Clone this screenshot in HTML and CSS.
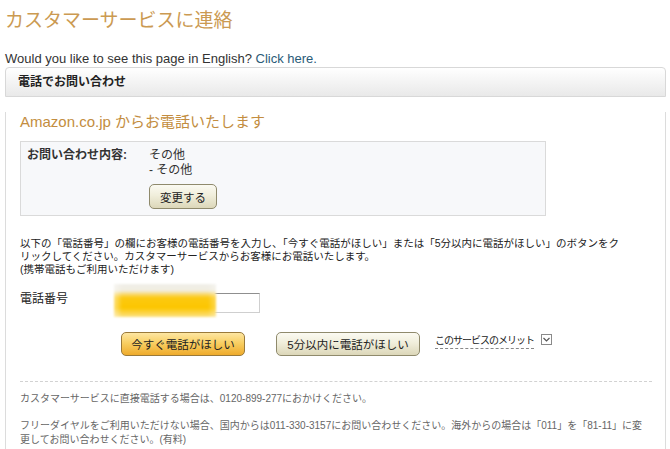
FILE: index.html
```html
<!DOCTYPE html>
<html lang="ja">
<head>
<meta charset="utf-8">
<title>カスタマーサービスに連絡</title>
<link rel="stylesheet" href="styles.css">
</head>
<body>
<h1 class="title">カスタマーサービスに連絡</h1>
<p class="lang">Would you like to see this page in English? <a class="link" href="#">Click here.</a></p>
<div class="panel">
  <div class="panel-head">電話でお問い合わせ</div>
  <div class="panel-body">
    <h2 class="call-title"><span class="latin">Amazon.co.jp</span> からお電話いたします</h2>
    <div class="inquiry">
      <div class="inq-label">お問い合わせ内容:</div>
      <div class="inq-values">
        <div>その他</div>
        <div>- その他</div>
        <button class="btn btn-beige btn-change" type="button">変更する</button>
      </div>
    </div>
    <p class="instructions">以下の「電話番号」の欄にお客様の電話番号を入力し、「今すぐ電話がほしい」または「5分以内に電話がほしい」のボタンをク<br>リックしてください。カスタマーサービスからお客様にお電話いたします。<br>(携帯電話もご利用いただけます)</p>
    <div class="phone-row">
      <label class="phone-label">電話番号</label>
      <div class="phone-field">
        <input class="phone-input" type="text">
        <div class="redact"></div>
      </div>
    </div>
    <div class="actions">
      <button class="btn btn-orange" type="button">今すぐ電話がほしい</button>
      <button class="btn btn-beige btn-five" type="button">5分以内に電話がほしい</button>
      <span class="merit">このサービスのメリット</span>
      <svg class="merit-icon" width="11" height="11" viewBox="0 0 11 11"><rect x="0.5" y="0.5" width="10" height="10" fill="#fff" stroke="#8a8a8a"/><path d="M2.5 4 L5.5 7 L8.5 4" fill="none" stroke="#555" stroke-width="1.2"/></svg>
    </div>
    <div class="sep"></div>
    <p class="foot">カスタマーサービスに直接電話する場合は、0120-899-277におかけください。</p>
    <p class="foot foot2">フリーダイヤルをご利用いただけない場合、国内からは011-330-3157にお問い合わせください。海外からの場合は「011」を「81-11」に変<br>更してお問い合わせください。(有料)</p>
  </div>
</div>
</body>
</html>
```
FILE: styles.css
```css
* { box-sizing: border-box; }
body {
  margin: 0;
  font-family: "Liberation Sans", "Noto Sans CJK JP", sans-serif;
  color: #333;
  background: #fff;
  font-size: 12px;
}
.title {
  margin: 0;
  padding: 8px 0 0 5px;
  font-size: 19px;
  font-weight: normal;
  line-height: 26px;
  color: #cb9a52;
}
.lang {
  margin: 17px 0 0 5px;
  font-size: 13px;
  line-height: 16px;
  color: #333;
}
.link { color: #2a5b78; text-decoration: none; }
.panel {
  margin-left: 5px;
  width: 661px;
}
.panel-head {
  height: 30px;
  border: 1px solid #d8d8d8;
  border-radius: 4px 4px 0 0;
  background: linear-gradient(#ffffff, #f6f6f6 40%, #e9e9e9);
  padding-left: 12px;
  font-weight: bold;
  font-size: 12px;
  line-height: 28px;
  color: #222;
}
.panel-body {
  border-left: 1px solid #dcdcdc;
  border-right: 1px solid #dcdcdc;
  padding: 0 14px 10px 14px;
}
.call-title {
  margin: 15px 0 0;
  font-size: 15px;
  line-height: 20px;
  font-weight: normal;
  color: #c38d40;
}
.inquiry {
  margin-top: 9px;
  width: 526px;
  background: #f7f8fa;
  border: 1px solid #dadada;
  padding: 6px;
  display: flex;
  line-height: 15px;
  font-size: 12px;
}
.inq-label {
  width: 122px;
  font-weight: bold;
  color: #333;
}
.inq-values { display: flex; flex-direction: column; align-items: flex-start; }
.btn {
  font-family: "Liberation Sans", "Noto Sans CJK JP", sans-serif;
  font-size: 11.5px;
  color: #222;
  border-radius: 5px;
  padding: 0;
  cursor: pointer;
}
.btn-beige {
  border: 1px solid #8f8a6c;
  background: linear-gradient(#fbfaf2, #f0eedb 45%, #dcd7b9);
}
.btn-change {
  margin-top: 6px;
  width: 68px;
  height: 25px;
}
.instructions {
  margin: 21px 0 0;
  font-size: 10.5px;
  line-height: 13px;
  color: #222;
}
.phone-row {
  margin-top: 17px;
  display: flex;
  align-items: flex-start;
}
.phone-label {
  width: 100px;
  font-size: 12px;
  line-height: 12px;
  color: #222;
}
.phone-field {
  position: relative;
  width: 140px;
  height: 20px;
}
.phone-input {
  width: 140px;
  height: 20px;
  border: 1px solid #cfcfcf;
  border-top-color: #8f8f8f;
  margin: 0;
  padding: 0;
  background: #fff;
}
.redact {
  position: absolute;
  left: -6px;
  top: -9px;
  width: 102px;
  height: 33px;
  background:
    linear-gradient(to right, rgba(255,255,255,0.45) 0, rgba(255,255,255,0) 8%, rgba(255,255,255,0) 92%, rgba(255,255,255,0.3) 100%),
    linear-gradient(to bottom, #f0efe9 0, #f1ede0 20%, #f9d866 32%, #fcc911 42%, #fcc600 72%, #fcd340 86%, #fde283 100%);
  filter: blur(0.8px);
}
.actions {
  margin-top: 19px;
  padding-left: 101px;
  display: flex;
  align-items: flex-start;
}
.btn-orange {
  width: 124px;
  height: 24px;
  border: 1px solid #9a7a3a;
  background: linear-gradient(#fde6a2, #f8cf63 45%, #efab2c);
}
.btn-five {
  margin-left: 31px;
  width: 144px;
  height: 24px;
}
.merit {
  margin-left: 15px;
  margin-top: 1px;
  font-size: 10px;
  letter-spacing: -1px;
  line-height: 14px;
  padding-top: 1px;
  border-bottom: 1px dashed #888;
  color: #222;
}
.merit-icon {
  margin-left: 7px;
  margin-top: 2px;
}
.sep {
  margin-top: 25px;
  width: 632px;
  border-top: 1px dashed #d2d2d2;
}
.foot {
  margin: 10px 0 0;
  font-size: 10px;
  line-height: 14px;
  color: #666;
}
.foot2 { margin-top: 13px; }
```
